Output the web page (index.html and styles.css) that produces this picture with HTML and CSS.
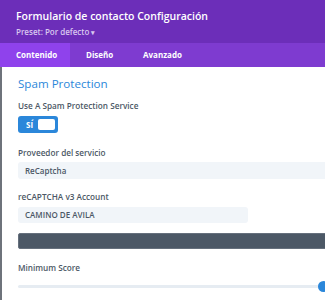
FILE: index.html
```
<!DOCTYPE html>
<html>
<head>
<meta charset="utf-8">
<link rel="stylesheet" href="styles.css">
</head>
<body>
<div class="modal">
  <header class="head">
    <div class="title">Formulario de contacto Configuración</div>
    <div class="preset">Preset: Por defecto <span class="caret">▾</span></div>
  </header>
  <nav class="tabs">
    <div class="tab t1 active">Contenido</div>
    <div class="tab t2">Diseño</div>
    <div class="tab t3">Avanzado</div>
  </nav>
  <main class="content">
    <h2 class="section">Spam Protection</h2>
    <div class="field f-toggle">
      <div class="label">Use A Spam Protection Service</div>
      <div class="toggle"><span class="on">SÍ</span><span class="knob"></span></div>
    </div>
    <div class="field f-select">
      <div class="label">Proveedor del servicio</div>
      <div class="select">ReCaptcha</div>
    </div>
    <div class="field f-account">
      <div class="label">reCAPTCHA v3 Account</div>
      <div class="input">CAMINO DE AVILA</div>
      <div class="darkbar"></div>
    </div>
    <div class="field f-score">
      <div class="label">Minimum Score</div>
      <div class="slider"><div class="track"></div><div class="thumb"></div></div>
    </div>
  </main>
</div>
</body>
</html>
```
FILE: styles.css
```
* { box-sizing: border-box; }
html, body { margin: 0; padding: 0; }
body {
  width: 325px;
  height: 300px;
  overflow: hidden;
  background: #6e737b;
  font-family: "Open Sans", "Noto Sans", sans-serif;
}
.modal { width: 325px; overflow: hidden; }
.head {
  background: #6c2eb9;
  height: 43px;
  padding: 9px 0 0 16px;
}
.title {
  color: #fff;
  font-size: 10.5px;
  font-weight: 600;
  line-height: 15px;
  white-space: nowrap;
}
.preset {
  color: #d8c7ef;
  font-size: 8px;
  font-weight: 600;
  line-height: 12px;
  margin-top: 2px;
}
.caret { font-size: 7px; }
.tabs {
  display: flex;
  background: #7e3bd0;
  height: 24px;
}
.tab {
  color: #fff;
  font-size: 8px;
  font-weight: 700;
  line-height: 24px;
  padding-left: 16px;
  white-space: nowrap;
}
.t1 { width: 70px; }
.t2 { width: 57px; }
.t3 { width: 80px; }
.tab.active { background: #8f42ec; }
.content {
  background: #fff;
  margin-left: 2px;
  height: 233px;
  width: 380px;
  padding: 8px 0 0 16px;
}
.section {
  margin: 0 0 7px 0;
  color: #2b87da;
  font-size: 11.6px;
  font-weight: 400;
  line-height: 18px;
  white-space: nowrap;
}
.label {
  color: #4c5866;
  font-size: 8.2px;
  font-weight: 600;
  line-height: 12px;
  white-space: nowrap;
}
.f-toggle { margin-bottom: 14px; }
.f-toggle .label { margin-bottom: 4px; }
.f-select { margin-bottom: 12px; }
.f-select .label { margin-bottom: 3px; }
.f-account { margin-bottom: 13px; }
.f-account .label { margin-bottom: 4px; }
.f-score .label { margin-bottom: 7px; }
.toggle {
  width: 40px;
  height: 17px;
  background: #2b87da;
  border-radius: 3px;
  display: flex;
  align-items: center;
  padding: 0 3px 0 8px;
  justify-content: space-between;
}
.on { color: #fff; font-size: 8px; font-weight: 700; }
.knob {
  width: 17px;
  height: 11px;
  background: #fff;
  border-radius: 2px;
}
.select, .input {
  background: #f1f5f9;
  border-radius: 3px;
  color: #4c5866;
  font-size: 8px;
  font-weight: 600;
  padding-left: 7px;
  white-space: nowrap;
}
.select { width: 360px; height: 17px; line-height: 17px; }
.input { width: 230px; height: 16px; line-height: 16px; }
.darkbar {
  width: 360px;
  height: 16px;
  background: #4c5866;
  border: 1px solid #66707d;
  border-radius: 2px;
  margin-top: 10px;
}
.slider {
  position: relative;
  width: 312px;
  height: 10px;
}
.track {
  position: absolute;
  left: 0; right: 4px; top: 4px;
  height: 3px;
  background: #e6ecf2;
  border-radius: 2px;
}
.thumb {
  position: absolute;
  left: 300px; top: 0;
  width: 11px;
  height: 11px;
  border-radius: 50%;
  background: #2b87da;
}
```
